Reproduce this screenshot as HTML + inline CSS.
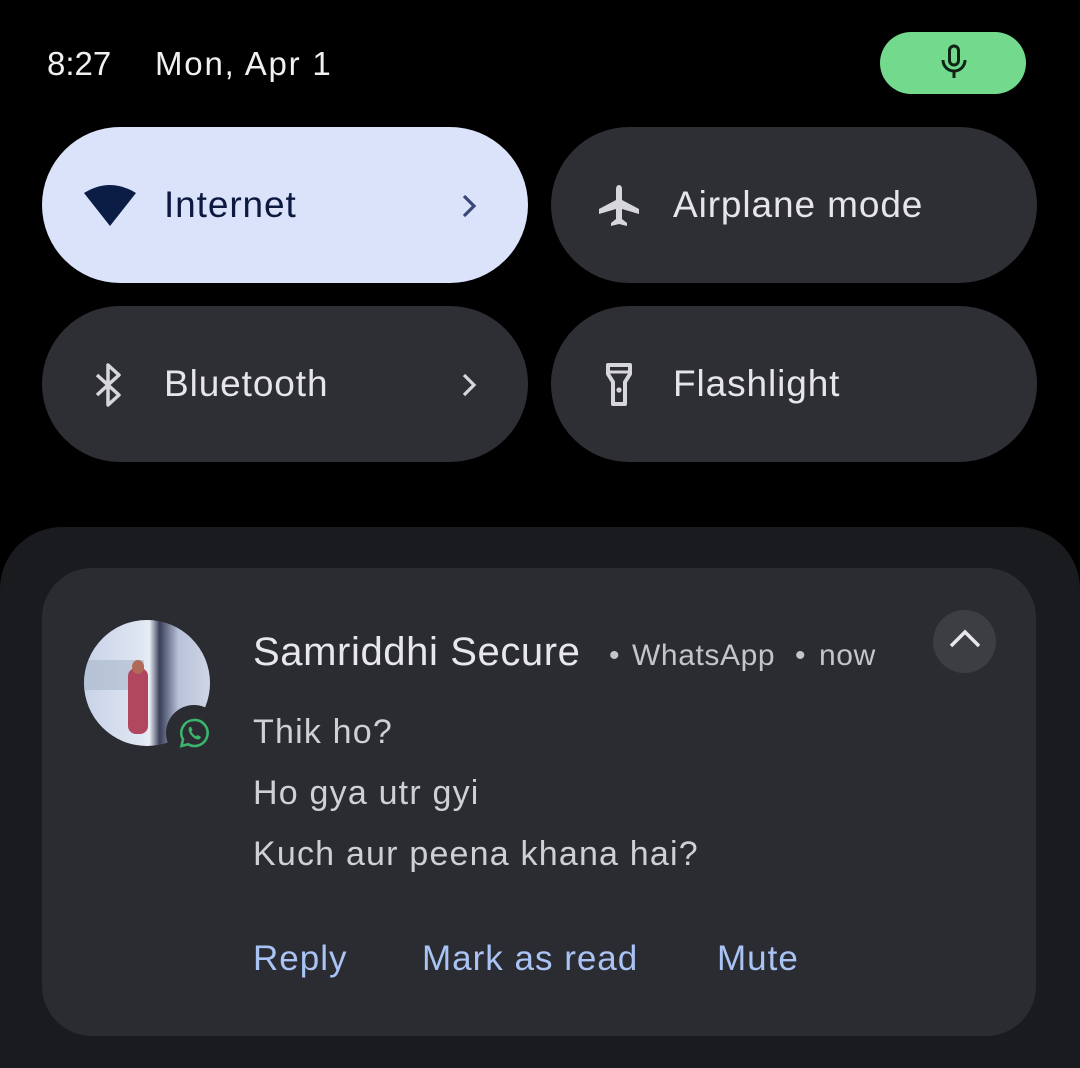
<!DOCTYPE html>
<html><head><style>
*{margin:0;padding:0;box-sizing:border-box}
html,body{width:1080px;height:1068px;overflow:hidden}
body{background:#000;position:relative;font-family:"Liberation Sans",sans-serif;color:#e6e6ea}
.abs{position:absolute}
.tile{position:absolute;width:486px;height:156px;border-radius:78px;background:#2e2f34}
.tl{position:absolute;left:122px;top:52px;font-size:37px;line-height:52px;white-space:nowrap;letter-spacing:0.9px}
.txt{position:absolute;white-space:nowrap}
.msg{font-size:34px;line-height:44px;color:#cfd0d5;letter-spacing:1.2px}
.act{font-size:35px;line-height:46px;color:#a9c3f4;letter-spacing:1px}
</style></head><body>
<div class="txt" style="left:47px;top:42px;font-size:33px;line-height:44px;color:#f0f0f0">8:27</div>
<div class="txt" style="left:155px;top:42px;font-size:33px;line-height:44px;color:#f0f0f0;letter-spacing:1.8px">Mon, Apr 1</div>
<div class="abs" style="left:880px;top:32px;width:146px;height:62px;border-radius:31px;background:#72d98d"></div>
<svg class="abs" style="left:938px;top:44px" width="32" height="38" viewBox="0 0 32 38"><rect x="11.5" y="2" width="9" height="19" rx="4.5" fill="none" stroke="#0f2414" stroke-width="3"/><path d="M5 16a11 11 0 0 0 22 0M16 27v7" fill="none" stroke="#0f2414" stroke-width="3"/></svg>

<div class="tile" style="left:42px;top:127px;background:#dbe3fb">
<svg class="abs" style="left:40px;top:56px" width="56" height="46" viewBox="0 0 56 46"><path d="M2 10Q28-6 54 10L28 43Z" fill="#0c1d45"/></svg>
<div class="tl" style="color:#0c1a40">Internet</div>
<svg class="abs" style="left:418px;top:66px" width="20" height="26" viewBox="0 0 20 26"><path d="M4 3l10 10-10 10" fill="none" stroke="#3a4778" stroke-width="3.2"/></svg>
</div>
<div class="tile" style="left:551px;top:127px">
<svg class="abs" style="left:44px;top:56px" width="48" height="46" viewBox="0 0 48 46"><path d="M24 2c-2 0-3 2-3 4v11L4 26v5l17-5v10l-5 4v3l8-2 8 2v-3l-5-4V26l17 5v-5L27 17V6c0-2-1-4-3-4z" fill="#d6d6dc"/></svg>
<div class="tl">Airplane mode</div>
</div>
<div class="tile" style="left:42px;top:306px">
<svg class="abs" style="left:50px;top:56px" width="34" height="46" viewBox="0 0 34 46"><path d="M5 13l22 20-11 10V3l11 10L5 33" fill="none" stroke="#d6d6dc" stroke-width="3.5" stroke-linejoin="round"/></svg>
<div class="tl">Bluetooth</div>
<svg class="abs" style="left:418px;top:66px" width="20" height="26" viewBox="0 0 20 26"><path d="M4 3l10 10-10 10" fill="none" stroke="#d6d6dc" stroke-width="3.2"/></svg>
</div>
<div class="tile" style="left:551px;top:306px">
<svg class="abs" style="left:54px;top:56px" width="28" height="46" viewBox="0 0 28 46"><path d="M3 3h22v9l-5 8v22H8V20L3 12z" fill="none" stroke="#d6d6dc" stroke-width="4" stroke-linejoin="round"/><path d="M3 10h22" stroke="#d6d6dc" stroke-width="3"/><circle cx="14" cy="28" r="2.6" fill="#d6d6dc"/></svg>
<div class="tl">Flashlight</div>
</div>

<div class="abs" style="left:0;top:527px;width:1080px;height:541px;border-radius:62px 62px 0 0;background:#1a1b1f"></div>
<div class="abs" style="left:42px;top:568px;width:994px;height:468px;border-radius:50px;background:#2b2c31"></div>

<div class="abs" style="left:84px;top:620px;width:126px;height:126px;border-radius:50%;overflow:hidden;background:linear-gradient(90deg,#c9d3e8 0%,#dfe6f2 45%,#e8ecf4 52%,#3a3f5a 60%,#b8c2d8 75%,#cfd6e6 100%)">
<div class="abs" style="left:0;top:40px;width:60px;height:30px;background:#a9b7c9;opacity:.6"></div>
<div class="abs" style="left:44px;top:48px;width:20px;height:66px;border-radius:8px;background:#b0475f"></div>
<div class="abs" style="left:48px;top:40px;width:12px;height:14px;border-radius:50%;background:#b06a5a"></div>
</div>
<div class="abs" style="left:166px;top:705px;width:56px;height:56px;border-radius:50%;background:#2b2c31"></div>
<svg class="abs" style="left:178px;top:717px" width="32" height="32" viewBox="0 0 32 32"><path d="M16 3a13 13 0 0 0-11 19.5L3.5 29l6.7-1.7A13 13 0 1 0 16 3z" fill="none" stroke="#3cb46c" stroke-width="2.6"/><path d="M11 10.5c1-1 2-.8 2.4 0l1 2.3c.2.6-.6 1.4-1 1.8 1 2 2.6 3.6 4.6 4.6.4-.4 1.2-1.2 1.8-1l2.3 1c.8.4 1 1.4 0 2.4-1.6 1.6-4.6 1-8-2.4s-4-6.4-3.1-8.7z" fill="#3cb46c"/></svg>

<div class="txt" style="left:253px;top:628px;font-size:40px;line-height:48px;color:#e8e8ec;letter-spacing:0.6px">Samriddhi Secure</div>
<div class="txt" style="left:609px;top:636px;font-size:30px;line-height:40px;color:#c4c5cb">•</div>
<div class="txt" style="left:632px;top:636px;font-size:30px;line-height:40px;color:#c4c5cb;letter-spacing:0.6px">WhatsApp</div>
<div class="txt" style="left:795px;top:636px;font-size:30px;line-height:40px;color:#c4c5cb">•</div>
<div class="txt" style="left:819px;top:636px;font-size:30px;line-height:40px;color:#c4c5cb;letter-spacing:0.6px">now</div>
<div class="abs" style="left:933px;top:610px;width:63px;height:63px;border-radius:50%;background:#3d3e43"></div>
<svg class="abs" style="left:947px;top:627px" width="36" height="24" viewBox="0 0 36 24"><path d="M4 19L18 5l14 14" fill="none" stroke="#e8e8ec" stroke-width="3.5"/></svg>

<div class="txt msg" style="left:253px;top:710px">Thik ho?</div>
<div class="txt msg" style="left:253px;top:771px">Ho gya utr gyi</div>
<div class="txt msg" style="left:253px;top:832px">Kuch aur peena khana hai?</div>

<div class="txt act" style="left:253px;top:936px">Reply</div>
<div class="txt act" style="left:422px;top:936px">Mark as read</div>
<div class="txt act" style="left:717px;top:936px">Mute</div>
</body></html>
